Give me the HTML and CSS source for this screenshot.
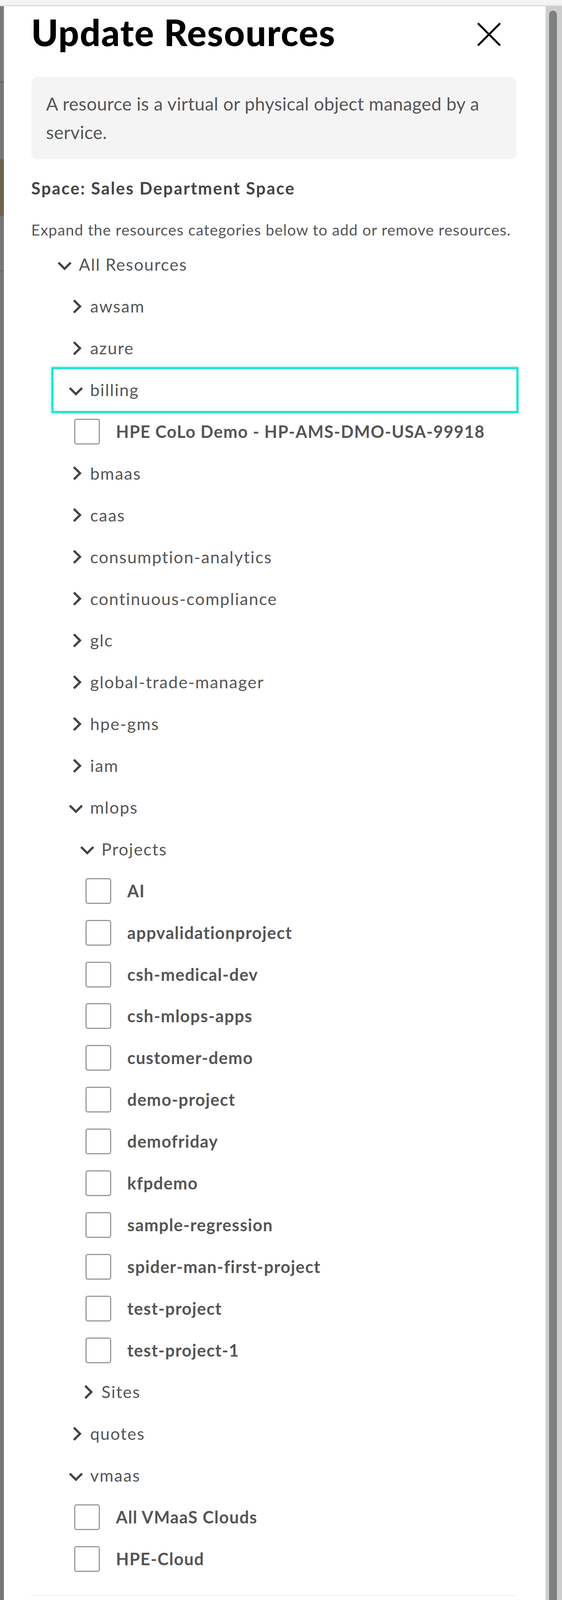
FILE: index.html
```html
<!DOCTYPE html>
<html lang="en">
<head>
<meta charset="utf-8">
<title>Update Resources</title>
<link rel="stylesheet" href="styles.css">
</head>
<body>
<div class="topbar"></div>
<div class="frame">
  <div class="backdrop"></div>
  <section class="panel">
    <header class="header">
      <h1 class="title">Update Resources</h1>
      <button class="close" aria-label="Close">
        <svg viewBox="0 0 24 24" class="close-icon"><path d="M3 3L21 21M3 21L21 3"/></svg>
      </button>
    </header>
    <div class="info">A resource is a virtual or physical object managed by a service.</div>
    <p class="space">Space: Sales Department Space</p>
    <p class="hint">Expand the resources categories below to add or remove resources.</p>

    <ul class="tree" role="tree">
      <li>
        <div class="node"><svg class="chev" viewBox="0 0 24 24"><path d="M18 10l-6 6-6-6"/></svg><span class="label">All Resources</span></div>
        <ul class="group">
          <li><div class="node"><svg class="chev" viewBox="0 0 24 24"><path d="M10 6l6 6-6 6"/></svg><span class="label">awsam</span></div></li>
          <li><div class="node"><svg class="chev" viewBox="0 0 24 24"><path d="M10 6l6 6-6 6"/></svg><span class="label">azure</span></div></li>
          <li>
            <div class="node focused"><svg class="chev" viewBox="0 0 24 24"><path d="M18 10l-6 6-6-6"/></svg><span class="label">billing</span></div>
            <ul class="group">
              <li class="leaf"><span class="box"></span><span class="leaf-label">HPE CoLo Demo - HP-AMS-DMO-USA-99918</span></li>
            </ul>
          </li>
          <li><div class="node"><svg class="chev" viewBox="0 0 24 24"><path d="M10 6l6 6-6 6"/></svg><span class="label">bmaas</span></div></li>
          <li><div class="node"><svg class="chev" viewBox="0 0 24 24"><path d="M10 6l6 6-6 6"/></svg><span class="label">caas</span></div></li>
          <li><div class="node"><svg class="chev" viewBox="0 0 24 24"><path d="M10 6l6 6-6 6"/></svg><span class="label">consumption-analytics</span></div></li>
          <li><div class="node"><svg class="chev" viewBox="0 0 24 24"><path d="M10 6l6 6-6 6"/></svg><span class="label">continuous-compliance</span></div></li>
          <li><div class="node"><svg class="chev" viewBox="0 0 24 24"><path d="M10 6l6 6-6 6"/></svg><span class="label">glc</span></div></li>
          <li><div class="node"><svg class="chev" viewBox="0 0 24 24"><path d="M10 6l6 6-6 6"/></svg><span class="label">global-trade-manager</span></div></li>
          <li><div class="node"><svg class="chev" viewBox="0 0 24 24"><path d="M10 6l6 6-6 6"/></svg><span class="label">hpe-gms</span></div></li>
          <li><div class="node"><svg class="chev" viewBox="0 0 24 24"><path d="M10 6l6 6-6 6"/></svg><span class="label">iam</span></div></li>
          <li>
            <div class="node"><svg class="chev" viewBox="0 0 24 24"><path d="M18 10l-6 6-6-6"/></svg><span class="label">mlops</span></div>
            <ul class="group">
              <li>
                <div class="node"><svg class="chev" viewBox="0 0 24 24"><path d="M18 10l-6 6-6-6"/></svg><span class="label">Projects</span></div>
                <ul class="group">
                  <li class="leaf"><span class="box"></span><span class="leaf-label">AI</span></li>
                  <li class="leaf"><span class="box"></span><span class="leaf-label">appvalidationproject</span></li>
                  <li class="leaf"><span class="box"></span><span class="leaf-label">csh-medical-dev</span></li>
                  <li class="leaf"><span class="box"></span><span class="leaf-label">csh-mlops-apps</span></li>
                  <li class="leaf"><span class="box"></span><span class="leaf-label">customer-demo</span></li>
                  <li class="leaf"><span class="box"></span><span class="leaf-label">demo-project</span></li>
                  <li class="leaf"><span class="box"></span><span class="leaf-label">demofriday</span></li>
                  <li class="leaf"><span class="box"></span><span class="leaf-label">kfpdemo</span></li>
                  <li class="leaf"><span class="box"></span><span class="leaf-label">sample-regression</span></li>
                  <li class="leaf"><span class="box"></span><span class="leaf-label">spider-man-first-project</span></li>
                  <li class="leaf"><span class="box"></span><span class="leaf-label">test-project</span></li>
                  <li class="leaf"><span class="box"></span><span class="leaf-label">test-project-1</span></li>
                </ul>
              </li>
              <li><div class="node"><svg class="chev" viewBox="0 0 24 24"><path d="M10 6l6 6-6 6"/></svg><span class="label">Sites</span></div></li>
            </ul>
          </li>
          <li><div class="node"><svg class="chev" viewBox="0 0 24 24"><path d="M10 6l6 6-6 6"/></svg><span class="label">quotes</span></div></li>
          <li>
            <div class="node"><svg class="chev" viewBox="0 0 24 24"><path d="M18 10l-6 6-6-6"/></svg><span class="label">vmaas</span></div>
            <ul class="group">
              <li class="leaf"><span class="box"></span><span class="leaf-label">All VMaaS Clouds</span></li>
              <li class="leaf"><span class="box"></span><span class="leaf-label">HPE-Cloud</span></li>
            </ul>
          </li>
        </ul>
      </li>
    </ul>
    <div class="footer"></div>
  </section>
  <div class="scrollbar"><div class="thumb"></div></div>
</div>
</body>
</html>
```

FILE: styles.css
```css
* { box-sizing: border-box; }

html, body {
  margin: 0;
  padding: 0;
}

body {
  width: 1440px;
  height: 4098px;
  overflow: hidden;
  background: #ffffff;
  font-family: Lato, "Liberation Sans", sans-serif;
  color: #555555;
}

.topbar {
  height: 16px;
  background: #f4f4f4;
  border-bottom: 3px solid #dcdcdc;
}

.frame {
  display: flex;
  height: 4082px;
}

.backdrop {
  width: 10px;
  flex: none;
  background: linear-gradient(to bottom,
    #7a7a7a 0, #7a7a7a 193px,
    #5e5e5e 193px, #5e5e5e 195px,
    #777777 195px, #777777 392px,
    #6e634b 392px, #6e634b 537px,
    #777777 537px, #777777 676px,
    #5e5e5e 676px, #5e5e5e 678px,
    #777777 678px);
}

.panel {
  flex: 1;
  min-width: 0;
  background: #ffffff;
  padding: 0 74px 0 70px;
}

.header {
  display: flex;
  justify-content: space-between;
  align-items: flex-start;
  padding-top: 11px;
}

.title {
  margin: 0;
  font-family: Lato, "Liberation Sans", sans-serif;
  font-weight: 900;
  font-size: 93px;
  line-height: 110px;
  color: #000000;
  letter-spacing: 1.8px;
}

.close {
  width: 72px;
  height: 72px;
  margin-top: 25px;
  margin-right: 34px;
  padding: 0;
  border: none;
  background: none;
}

.close-icon {
  display: block;
  width: 72px;
  height: 72px;
  fill: none;
  stroke: #000000;
  stroke-width: 1.7;
  stroke-linecap: round;
}

.info {
  margin-top: 60px;
  background: #f4f4f4;
  border-radius: 16px;
  padding: 32px 38px 33px;
  font-size: 46px;
  line-height: 73px;
  letter-spacing: 0.5px;
  color: #555555;
}

.space {
  margin: 48px 0 0;
  font-weight: 700;
  font-size: 43px;
  line-height: 52px;
  color: #444444;
  letter-spacing: 2.7px;
}

.hint {
  margin: 57px 0 0;
  font-size: 39px;
  line-height: 47px;
  color: #555555;
  letter-spacing: 1.2px;
  white-space: nowrap;
}

.tree {
  list-style: none;
  margin: 12px 0 0;
  padding: 0 0 0 28px;
}

.group {
  list-style: none;
  margin: 0;
  padding: 0 0 0 29px;
}

.node {
  display: flex;
  align-items: center;
  gap: 5px;
  height: 106.9px;
  padding-left: 26px;
}

.node.focused {
  box-shadow: 0 0 0 5px #14e6cf, 0 0 4px 7px rgba(20, 230, 207, 0.5);
}

.chev {
  width: 63px;
  height: 63px;
  flex: none;
  fill: none;
  stroke: #444444;
  stroke-width: 2.2;
}

.label {
  font-size: 43px;
  line-height: 52px;
  color: #555555;
  letter-spacing: 2px;
  white-space: nowrap;
}

.leaf {
  display: flex;
  align-items: center;
  height: 106.9px;
  padding-left: 24px;
}

.box {
  width: 66px;
  height: 66px;
  flex: none;
  border: 3px solid #999999;
  border-radius: 6px;
  background: #ffffff;
  margin-right: 41px;
}

.leaf-label {
  font-weight: 700;
  font-size: 43px;
  line-height: 52px;
  color: #555555;
  letter-spacing: 1.5px;
  white-space: nowrap;
}

.footer {
  margin-top: 38px;
  border-top: 3px solid #f3f3f3;
}

.scrollbar {
  width: 43px;
  flex: none;
  background: #cdcdcd;
  border-left: 2px solid #e2e2e2;
  padding: 11px 13px 0 8px;
}

.thumb {
  height: 4100px;
  border-radius: 10px;
  background: #7c8080;
}
```
